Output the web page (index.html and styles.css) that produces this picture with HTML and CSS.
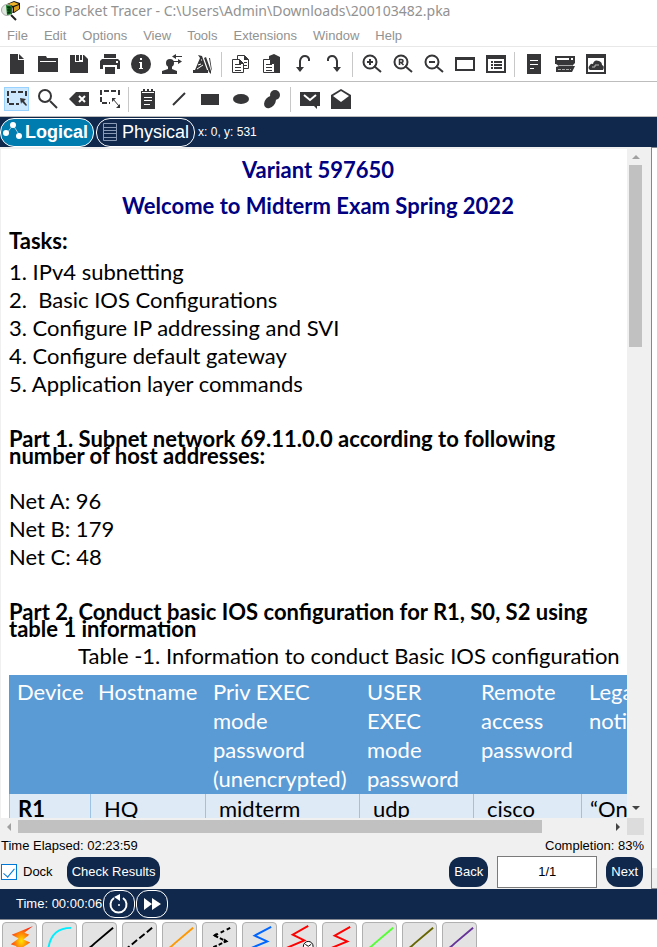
FILE: index.html
```html
<!DOCTYPE html>
<html lang="en">
<head>
<meta charset="utf-8">
<title>Cisco Packet Tracer</title>
<link rel="stylesheet" href="styles.css">
</head>
<body>
<header class="titlebar">
  <svg class="app-icon" width="22" height="20" viewBox="0 0 22 20"><path d="M7 3l7-3 6 2v6l-6 4-7-1z" fill="#111"/><path d="M8 3l6-2 5 2-6 2z" fill="#f0b429"/><path d="M14 6l5-2v4l-5 3z" fill="#d99b1c"/><circle cx="7" cy="9" r="5.500" fill="#dfe8df" stroke="#aaa"/><path d="M6 4l6 1v8l-5 1z" fill="#137a20"/><path d="M7 6l4 1M7 9l4 0M7 12l4-1M9 5v8" stroke="#062c0a"/><path d="M11 14l5 5" stroke="#222" stroke-width="2"/></svg>
  <h1 class="title">Cisco Packet Tracer - C:\Users\Admin\Downloads\200103482.pka</h1>
</header>
<nav class="menu">
  <a href="#">File</a><a href="#">Edit</a><a href="#">Options</a><a href="#">View</a><a href="#">Tools</a><a href="#">Extensions</a><a href="#">Window</a><a href="#">Help</a>
</nav>
<div class="toolbar">
  <button class="tool" aria-label="New"><svg viewBox="0 0 20 20"><path d="M3 0h8v6h6v14H3z"/><path d="M12 0l5 5h-5z"/></svg></button>
  <button class="tool" aria-label="Open"><svg viewBox="0 0 20 20"><path d="M0 2h8l1 2h11v14H0z"/><path class="cut thin" d="M2 7.500h16"/></svg></button>
  <button class="tool" aria-label="Save"><svg viewBox="0 0 20 20"><path d="M1 1h14l4 4v14H1z"/><path fill="#fff" d="M6 1h8v7H6z"/><path d="M7 1h3v6H7zM11 1h2v5h-2z"/></svg></button>
  <button class="tool" aria-label="Print"><svg viewBox="0 0 20 20"><path d="M4 0h12v4H4zM2 5h16l2 2v8h-3v-4H3v4H0V7zM5 13h10v7H5z"/><path fill="#fff" d="M16 7h2v2h-2z"/></svg></button>
  <button class="tool" aria-label="Activity wizard"><svg viewBox="0 0 20 20"><circle cx="10" cy="10" r="10"/><path fill="#fff" d="M9 4h2v2H9zM8 8h3v6h1v1H8v-1h1V9H8z"/></svg></button>
  <button class="tool" aria-label="User profile"><svg viewBox="0 0 20 20"><circle cx="8" cy="9" r="4"/><path d="M6 12h4v3l5 2v3H0v-3l6-2z"/><path class="ln thin" d="M13 2.500h7M11 7.500h7"/><path d="M14 0v5l-4-2.500zM16 5v5l4-2.500z"/></svg></button>
  <button class="tool" aria-label="Drawing palette"><svg viewBox="0 0 20 20"><path d="M5 1l4 1 5 14H2L7 4zM0 16h15v3H0zM11 4l2-1 5 14v3l-2-2zM16 4h1l2 13-1-2z"/><path stroke="#fff" fill="none" d="M5 11l3-1M4 15l6-4M8 6h1"/></svg></button>
  <span class="sep"></span>
  <button class="tool" aria-label="Copy"><svg viewBox="0 0 20 20"><path class="box" d="M6.500 1.500h7l4 4v9h-11z"/><path class="box" d="M1.500 5.500h7l4 4v9h-11z"/><path class="ln thin" d="M4 10.500h6M4 13.500h6M4 16.500h6M13 8.500h3M13 11.500h3"/><path d="M8 5v5h5zM13 1v5h5z"/></svg></button>
  <button class="tool" aria-label="Paste"><svg viewBox="0 0 20 20"><path d="M7 2l5-2 6 3v16H7z"/><path class="box" d="M1.500 5.500h7l4 4v9h-11z"/><path class="ln thin" d="M4 10.500h6M4 13.500h6M4 16.500h6"/><path d="M8 5v5h5z"/></svg></button>
  <button class="tool" aria-label="Undo"><svg viewBox="0 0 20 20"><path class="ln" d="M16 7V5q-1-3-4-3-4 0-5 5v8"/><path d="M3 13h8l-4 5z"/></svg></button>
  <button class="tool" aria-label="Redo"><svg viewBox="0 0 20 20"><path class="ln" d="M4 7V5q1-3 4-3 4 0 5 5v8"/><path d="M9 13h8l-4 5z"/></svg></button>
  <span class="sep"></span>
  <button class="tool" aria-label="Zoom in"><svg viewBox="0 0 20 20"><circle class="ln" cx="8" cy="8" r="6.500"/><path class="ln" d="M12 12l7 6M5 8h6M8 5v6"/></svg></button>
  <button class="tool" aria-label="Zoom reset"><svg viewBox="0 0 20 20"><circle class="ln" cx="8" cy="8" r="6.500"/><path class="ln" d="M12 12l7 6"/><path class="ln letter" d="M6.500 11V5.500H8q2 0 2 1.500T8 8.500H7M8 8.500L10.500 11"/></svg></button>
  <button class="tool" aria-label="Zoom out"><svg viewBox="0 0 20 20"><circle class="ln" cx="8" cy="8" r="6.500"/><path class="ln" d="M12 12l7 6M5 8h6"/></svg></button>
  <button class="tool" aria-label="Viewport"><svg viewBox="0 0 20 20"><path class="ln" d="M1 4h18v12H1z"/><path d="M0 3h20v3H0z"/></svg></button>
  <button class="tool" aria-label="Workspace list"><svg viewBox="0 0 20 20"><path class="ln" d="M1 2h18v16H1z"/><path d="M0 1h20v4H0z"/><path class="ln" d="M5 8h2M5 11h2M5 14h2M8 8h8M8 11h8M8 14h8"/></svg></button>
  <span class="sep"></span>
  <button class="tool" aria-label="Notes"><svg viewBox="0 0 20 20"><path d="M3 0h14v20H3z"/><path stroke="#fff" d="M6 6.500h8M6 10.500h8M6 14.500h4"/></svg></button>
  <button class="tool" aria-label="Devices"><svg viewBox="0 0 20 20"><path d="M0 2h20v7l-3 3h3l-3 6H1v-5l3-1-3-2H0z"/><path fill="#fff" d="M2 4h12v2H2zM16 4h2v2h-2z"/><path stroke="#aaa" d="M4 11.500h13"/><path stroke="#aaa" stroke-dasharray="3 1" d="M3 15.500h13"/></svg></button>
  <button class="tool" aria-label="Cloud"><svg viewBox="0 0 20 20"><path class="ln" d="M1 1h18v18H1z"/><path d="M0 0h20v4H0zM4 16q-3-2 0-5 1-2 3-1 1-5 6-3 3 1 3 4 3 1 1 5z"/><path stroke="#bbb" fill="none" d="M6 13h3v-2h4"/></svg></button>
</div>
<div class="toolbar">
  <button class="tool selected" aria-label="Select"><svg viewBox="0 0 20 20"><path class="ln" stroke-dasharray="5 2" d="M1 7V3h18v5M1 9v6h11"/><path d="M13 9l6 1-2 2 3 4-1 1-4-4-1 2z"/></svg></button>
  <button class="tool" aria-label="Inspect"><svg viewBox="0 0 20 20"><circle class="ln" cx="7" cy="7" r="6"/><path class="ln" d="M12 12l7 7"/></svg></button>
  <button class="tool" aria-label="Delete"><svg viewBox="0 0 20 20"><path d="M0 10l7-7h13v14H7z"/><path class="cut" d="M10 7l6 6M16 7l-6 6"/></svg></button>
  <button class="tool" aria-label="Resize"><svg viewBox="0 0 20 20"><path class="ln" stroke-dasharray="5 2" d="M1 6V2h18v6M1 8v6h9"/><path class="ln thin" d="M13 10l6 7"/><path d="M12 9h4l-4 4zM20 19h-4l4-4z"/></svg></button>
  <span class="sep"></span>
  <button class="tool" aria-label="Place note"><svg viewBox="0 0 20 20"><path d="M3 2h14v18H3zM5 0h2v3H5zM9 0h2v3H9zM13 0h2v3h-2z"/><path stroke="#fff" d="M6 8.500h8M6 11.500h8M6 15.500h6M4 3.500h12"/></svg></button>
  <button class="tool" aria-label="Line"><svg viewBox="0 0 20 20"><path class="ln" d="M4 16L16 4"/></svg></button>
  <button class="tool" aria-label="Rectangle"><svg viewBox="0 0 20 20"><path d="M1 5h18v11H1z"/></svg></button>
  <button class="tool" aria-label="Ellipse"><svg viewBox="0 0 20 20"><ellipse cx="10" cy="10" rx="8" ry="5"/></svg></button>
  <button class="tool" aria-label="Freeform"><svg viewBox="0 0 20 20"><circle cx="13" cy="6" r="5"/><ellipse cx="8" cy="13" rx="5" ry="7" transform="rotate(40 8 13)"/></svg></button>
  <span class="sep"></span>
  <button class="tool" aria-label="Simple PDU"><svg viewBox="0 0 20 20"><path d="M0 3h20v14h-3v3l-3-3H0z"/><path class="cut" d="M4 6l6 5 6-5"/></svg></button>
  <button class="tool" aria-label="Complex PDU"><svg viewBox="0 0 20 20"><path d="M0 6l10-6 10 6v14H0z"/><path fill="#fff" d="M2 7l8-5 8 5-8 6z"/></svg></button>
</div>
<div class="modebar">
  <button class="mode active"><svg width="20" height="20" viewBox="0 0 20 20"><path d="M4 11l6-8 7 11" stroke="#9cc9dd" fill="none"/><circle cx="10" cy="3" r="3" fill="#fff"/><circle cx="3" cy="11" r="3" fill="#fff"/><circle cx="16" cy="14" r="3" fill="#fff"/></svg>Logical</button>
  <button class="mode"><svg width="16" height="20" viewBox="0 0 16 20"><path d="M1.500 1.500h13v17h-13zM1 5.500h14M1 8.500h14M1 11.500h14M1 15.500h14" stroke="#8a9bb5" fill="none"/></svg>Physical</button>
  <span class="coords">x: 0, y: 531</span>
</div>
<main class="workspace">
  <section class="panel">
    <div class="viewer">
      <article class="doc">
        <h2 class="center">Variant 597650</h2>
        <h2 class="center">Welcome to Midterm Exam Spring 2022</h2>
        <h3 class="tasks-title">Tasks:</h3>
        <p class="line">1. IPv4 subnetting</p>
        <p class="line">2. &nbsp;Basic IOS Configurations</p>
        <p class="line">3. Configure IP addressing and SVI</p>
        <p class="line">4. Configure default gateway</p>
        <p class="line">5. Application layer commands</p>
        <h3 class="part">Part 1. Subnet network 69.11.0.0 according to following<br>number of host addresses:</h3>
        <p class="line">Net A: 96</p>
        <p class="line">Net B: 179</p>
        <p class="line">Net C: 48</p>
        <h3 class="part last">Part 2. Conduct basic IOS configuration for R1, S0, S2 using<br>table 1 information</h3>
        <table class="info">
          <caption>Table -1. Information to conduct Basic IOS configuration</caption>
          <colgroup><col class="c1"><col class="c2"><col class="c3"><col class="c4"><col class="c5"><col class="c6"></colgroup>
          <thead><tr><th>Device</th><th>Hostname</th><th>Priv EXEC<br>mode<br>password<br>(unencrypted)</th><th>USER<br>EXEC<br>mode<br>password</th><th>Remote<br>access<br>password</th><th>Legal<br>notice</th></tr></thead>
          <tbody><tr><td class="dev">R1</td><td>HQ</td><td>midterm</td><td>udp</td><td>cisco</td><td class="note">“Only</td></tr></tbody>
        </table>
      </article>
      <div class="vbar"><span class="arrow up"></span><span class="vthumb"></span><span class="arrow down"></span></div>
      <div class="hbar"><span class="arrow left"></span><span class="hthumb"></span><span class="arrow right"></span></div>
      <div class="corner"></div>
    </div>
    <div class="status"><span>Time Elapsed: 02:23:59</span><span>Completion: 83%</span></div>
    <div class="controls">
      <input class="check" type="checkbox" id="dock" checked><label for="dock">Dock</label>
      <button class="pill results">Check Results</button>
      <button class="pill back">Back</button>
      <input class="page" type="text" value="1/1" aria-label="Page">
      <button class="pill">Next</button>
    </div>
  </section>
  <aside class="edge"><div class="edge-view"></div></aside>
</main>
<div class="timebar">
  <span>Time: 00:00:06</span>
  <button class="round" aria-label="Power cycle devices"><svg width="20" height="20" viewBox="0 0 20 20"><path d="M5 4a8 8 0 1 0 9 0" fill="none" stroke="#fff" stroke-width="2"/><path d="M11 0v7L5 3z" fill="#fff"/><circle cx="10" cy="11" r="1" fill="#fff"/></svg></button>
  <button class="round" aria-label="Fast forward"><svg width="20" height="20" viewBox="0 0 20 20"><path d="M2 4l8 6-8 6zM10 4l9 6-9 6z" fill="#fff"/></svg></button>
</div>
<footer class="cables">
  <button class="cable" aria-label="Automatic"><svg viewBox="0 0 34 34"><defs><radialGradient id="bolt"><stop offset="0" stop-color="#ffe600"/><stop offset="1" stop-color="#ff2a10"/></radialGradient></defs><path d="M31 3L9 12l7 4-8 6 6 2-7 10 21-14-7-3 6-5-5-2z" fill="url(#bolt)"/></svg></button>
  <button class="cable" aria-label="Console"><svg viewBox="0 0 34 34"><path stroke="#0ef" d="M5 34Q5 5 29 5"/></svg></button>
  <button class="cable" aria-label="Copper straight-through"><svg viewBox="0 0 34 34"><path stroke="#000" d="M3 28q5-3 9-7L31 5"/></svg></button>
  <button class="cable" aria-label="Copper cross-over"><svg viewBox="0 0 34 34"><path stroke="#000" stroke-dasharray="7 3" d="M30 5L3 27"/></svg></button>
  <button class="cable" aria-label="Fiber"><svg viewBox="0 0 34 34"><path stroke="#ff9800" d="M3 28q5-3 9-7L31 5"/></svg></button>
  <button class="cable" aria-label="Phone"><svg viewBox="0 0 34 34"><path stroke="#000" stroke-dasharray="4 3" d="M28 5L12 13"/><path stroke="#000" stroke-dasharray="4 2" d="M12 13l12 6L8 26"/><path d="M10 13l4-3v5zM26 19l-4-3-1 4z" fill="#000"/></svg></button>
  <button class="cable" aria-label="Coaxial"><svg viewBox="0 0 34 34"><path stroke="#06f" d="M29 4L12 13l13 6L8 26"/></svg></button>
  <button class="cable" aria-label="Serial DCE"><svg viewBox="0 0 34 34"><path stroke="red" d="M26 3L10 12l12 6L3 26"/><circle class="hand" cx="26" cy="24" r="5" fill="#fff" stroke="#000"/><path stroke="#000" class="hand" d="M23 22l3 2 3-2"/></svg></button>
  <button class="cable" aria-label="Serial DTE"><svg viewBox="0 0 34 34"><path stroke="red" d="M28 4L12 13l13 6L8 26"/></svg></button>
  <button class="cable" aria-label="Octal"><svg viewBox="0 0 34 34"><path stroke="#5f3" d="M3 28q5-3 9-7L31 5"/></svg></button>
  <button class="cable" aria-label="IoT custom cable"><svg viewBox="0 0 34 34"><path stroke="#660" d="M3 28q5-3 9-7L31 5"/></svg></button>
  <button class="cable" aria-label="USB"><svg viewBox="0 0 34 34"><path stroke="#639" d="M3 28q5-3 9-7L31 5"/></svg></button>
</footer>
</body>
</html>
```
FILE: styles.css
```css
* { box-sizing: border-box; }
body { margin: 0; height: 100vh; display: flex; flex-direction: column; overflow: hidden; background: #fff; color: #000; font: 12px/16px "Liberation Sans", Arial, sans-serif; }
button { font: inherit; border: 0; padding: 0; margin: 0; background: none; }
svg { display: block; flex: none; }
h1, h2, h3, p { margin: 0; }
.titlebar { display: flex; align-items: center; height: 22px; gap: 4px; flex: none; }
.title { font: 14px/20px "Noto Sans", sans-serif; color: #929292; white-space: nowrap; }
.menu { display: flex; gap: 16px; height: 25px; padding: 4px 7px 0; align-items: center; border-bottom: 1px solid #e8e8e8; flex: none; }
.menu a { color: #929292; text-decoration: none; font-size: 13px; }
.toolbar { display: flex; gap: 6px; height: 35px; padding: 0 4px; align-items: center; border-bottom: 1px solid #bdbdbd; flex: none; }
.tool { width: 25px; height: 24px; display: flex; align-items: center; justify-content: center; flex: none; }
.tool svg { width: 20px; height: 20px; fill: #363638; }
.tool .ln { fill: none; stroke: #363638; stroke-width: 2; }
.tool .box { fill: #fff; stroke: #363638; }
.tool .cut { fill: none; stroke: #fff; stroke-width: 2; }
.tool .thin { stroke-width: 1; }
.tool .letter { stroke-width: 1.5; }
.tool.selected { background: #cce8ff; border: 1px solid #99d1ff; }
.sep { width: 1px; height: 25px; background: #c8c8c8; }
.modebar { display: flex; align-items: center; gap: 2px; height: 30px; background: #0f284b; color: #fff; flex: none; }
.mode { display: flex; align-items: center; gap: 4px; height: 29px; padding: 0 5px; border: 1px solid #fff; border-radius: 14px; color: #fff; font-size: 18px; white-space: nowrap; }
.active { background: #007cae; font-weight: bold; padding-left: 2px; gap: 2px; }
.coords { margin-left: 1px; }
.workspace { flex: 1; min-height: 0; display: flex; background: #f0f0f0; }
.panel { flex: 1; min-width: 0; display: flex; flex-direction: column; padding-right: 7px; }
.viewer { flex: 1; min-height: 0; display: grid; grid-template-columns: minmax(0, 1fr) 17px; grid-template-rows: minmax(0, 1fr) 17px; }
.doc { background: #fff; border-left: 1px solid #f0f0f0; border-top: 2px solid #f0f0f0; overflow: hidden; padding: 3px 0 0 8px; font: 22px/28px Lato, sans-serif; white-space: nowrap; }
.center { text-align: center; color: #000080; font-size: 22px; line-height: 36px; }
.tasks-title { font-size: 22px; line-height: 34px; }
.part { font-size: 22px; line-height: 17px; margin: 32px 0 23px; }
.last { margin-bottom: 5px; }
.info { border-collapse: collapse; table-layout: fixed; width: 720px; }
.info caption { text-align: left; padding: 0 0 5px 69px; line-height: 28px; }
.c1 { width: 81px; } .c2 { width: 115px; } .c3 { width: 154px; } .c4 { width: 114px; } .c5 { width: 108px; }
.info th { background: #5b9bd5; border: 1px solid #5b9bd5; color: #fff; font-weight: normal; text-align: left; vertical-align: top; line-height: 29px; padding: 1px 0 0 7px; }
.info td { background: #deeaf6; border: 1px solid #9cc2e5; padding: 1px 0 0 13px; }
.info .dev { font-weight: bold; padding-left: 8px; }
.info .note { padding-left: 8px; }
.vbar { display: flex; flex-direction: column; align-items: center; background: #f0f0f0; padding: 8px 0; gap: 6px; }
.vthumb { width: 13px; flex: 0 0 182px; background: #c1c1c1; }
.hbar { display: flex; align-items: center; background: #f0f0f0; padding: 0 7px; gap: 7px; }
.hthumb { height: 13px; flex: 0 1 524px; background: #c1c1c1; }
.corner { background: #dcdcdc; }
.arrow { border: 4px solid transparent; }
.up { border-top: 0; border-bottom-color: #a0a0a0; }
.down { border-bottom: 0; border-top-color: #444; margin-top: auto; }
.left { border-left: 0; border-right-color: #a0a0a0; }
.right { border-right: 0; border-left-color: #444; margin-left: auto; }
.status { display: flex; justify-content: space-between; padding: 3px 0 0 1px; font-size: 13px; }
.controls { display: flex; align-items: center; height: 35px; padding: 0 1px; font-size: 13px; }
.check { appearance: none; width: 16px; height: 16px; margin: 0 6px 0 0; background: #fff; border: 1px solid #0078d7; display: grid; place-items: center; }
.check:checked::before { content: ""; width: 5px; height: 10px; border: solid #0078d7; border-width: 0 1px 1px 0; transform: rotate(40deg); }
.pill { height: 30px; padding: 0 5px; background: #0f284b; color: #fff; border-radius: 12px; white-space: nowrap; }
.results { margin-left: 14px; }
.back { margin-left: auto; }
.page { width: 100px; height: 32px; margin: 0 9px; border: 1px solid #7a7a7a; text-align: center; font: inherit; background: #fff; }
.edge { width: 6px; border-left: 1px solid #828790; border-top: 1px solid #828790; border-bottom: 1px solid #828790; }
.edge-view { height: 720px; background: #fff; }
.timebar { display: flex; align-items: center; height: 31px; background: #0f284b; border-bottom: 1px solid #828790; color: #fff; padding-left: 16px; gap: 1px; font-size: 13px; flex: none; }
.round { width: 32px; height: 28px; border: 1px solid #fff; border-radius: 12px; display: grid; place-items: center; }
.cables { display: flex; gap: 5px; height: 27px; padding: 2px 2px 0; overflow: hidden; flex: none; }
.cable { width: 35px; height: 35px; background: #e3e3e3; border: 1px solid #b0b0b0; border-radius: 4px; flex: none; }
.cable svg { width: 33px; height: 33px; fill: none; stroke-width: 2; }
.cable .hand { stroke-width: 1; }
```
